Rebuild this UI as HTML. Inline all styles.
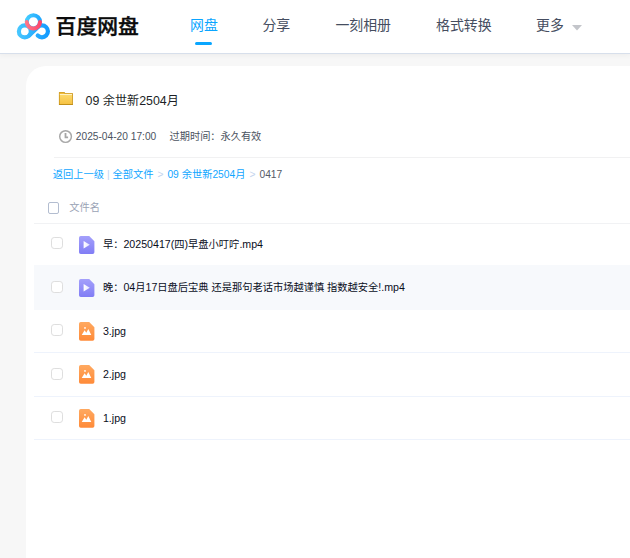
<!DOCTYPE html>
<html lang="zh-CN">
<head>
<meta charset="utf-8">
<title>百度网盘</title>
<style>
*{box-sizing:border-box;margin:0;padding:0}
html,body{width:630px;height:558px;overflow:hidden}
body{background:#f7f7f7;font-family:"Liberation Sans","Noto Sans CJK SC",sans-serif;color:#03081a;position:relative}
.hd{position:absolute;left:0;top:0;width:630px;height:54px;background:#fff;border-bottom:1px solid #d7dfeb;box-shadow:0 2px 5px rgba(0,0,0,.04)}
.logo{position:absolute;left:0;top:0}
.brand{position:absolute;left:55.6px;top:11.6px;font-size:20.8px;font-weight:500;-webkit-text-stroke:.4px #0b0b0b;line-height:30px;color:#0b0b0b;white-space:nowrap}
.nav{position:absolute;top:12.5px;font-size:13.9px;line-height:24px;color:#454d60;white-space:nowrap}
.nav.on{color:#0aa5ff}
.bar{position:absolute;left:195px;top:41.7px;width:17px;height:3px;border-radius:2px;background:#09a6ff}
.panel{position:absolute;left:26px;top:66px;width:620px;height:520px;background:#fff;border-top-left-radius:20px}
.t{position:absolute;white-space:nowrap}
.title{left:85.6px;top:92px;font-size:12.1px;line-height:18px;color:#1c1f26}
.meta{top:128.6px;font-size:10.2px;line-height:16px;color:#4b5361}
.hr{position:absolute;height:1px;background:#f1f1f2}
.crumb{top:166.5px;font-size:10.25px;line-height:16px;color:#10a6ff}
.crumb i{font-style:normal;color:#c3d4ee}
.crumb i.g{margin:0 1.1px 0 1.2px}
.colh{left:69.3px;top:199.6px;font-size:10.25px;line-height:16px;color:#9aa3b5}
.cb{position:absolute;width:11.6px;height:11.8px;border:1px solid #dedede;border-radius:3.2px;background:#fff}
.row{position:absolute;left:34px;width:596px}
.fn{position:absolute;left:102.9px;font-size:10.25px;line-height:16px;color:#0a0e1c;white-space:nowrap}
.ic{position:absolute;left:78.8px}
.fn b{font-weight:400;font-size:10.65px}
.title b{font-weight:400;font-size:12.4px}
</style>
</head>
<body>
<div class="hd">
  <svg class="logo" width="60" height="53" viewBox="0 0 60 53">
    <defs>
      <linearGradient id="gb" gradientUnits="userSpaceOnUse" x1="17" y1="0" x2="50" y2="0"><stop offset="0" stop-color="#48c8ff"/><stop offset="1" stop-color="#0f98ff"/></linearGradient>
      <linearGradient id="gt" gradientUnits="userSpaceOnUse" x1="25" y1="0" x2="42" y2="0"><stop offset="0" stop-color="#48d0ff"/><stop offset="1" stop-color="#1ca4ff"/></linearGradient>
      <linearGradient id="gr" gradientUnits="userSpaceOnUse" x1="25" y1="0" x2="42" y2="0"><stop offset="0" stop-color="#ff7a8c"/><stop offset="1" stop-color="#ff3f66"/></linearGradient>
    </defs>
    <g fill="none" stroke-linecap="round" stroke-width="4.2">
      <path stroke="url(#gb)" d="M37.700 35.500 A5.950 5.950 0 1 0 37.700 27.200 L29.100 35.600"/>
      <circle cx="24.850" cy="31.400" r="5.950" stroke="url(#gb)"/>
      <circle cx="33.400" cy="21.800" r="6.600" stroke="url(#gt)" stroke-width="4"/>
      <path stroke="url(#gr)" stroke-width="4" d="M26.800 22 A6.600 6.600 0 0 0 40 22"/>
    </g>
  </svg>
  <div class="brand">百度网盘</div>
  <div class="nav on" style="left:190px">网盘</div>
  <div class="bar"></div>
  <div class="nav" style="left:262.4px">分享</div>
  <div class="nav" style="left:335.4px">一刻相册</div>
  <div class="nav" style="left:436px">格式转换</div>
  <div class="nav" style="left:536px">更多</div>
  <svg style="position:absolute;left:571px;top:24px" width="12" height="8" viewBox="0 0 12 8"><path d="M1 .9h10L6 6.4z" fill="#c3c5ca"/></svg>
</div>
<div class="panel"></div>

<svg style="position:absolute;left:58px;top:91px" width="16" height="15" viewBox="0 0 16 15">
  <defs><linearGradient id="gf" x1="0" y1="0" x2="0" y2="1"><stop offset="0" stop-color="#fddb6e"/><stop offset="1" stop-color="#f6c243"/></linearGradient></defs>
  <path d="M.9 1.4 a.5 .5 0 0 1 .5-.5 h5 a.5 .5 0 0 1 .5 .5 v.6 h7.5 a.5 .5 0 0 1 .5 .5 v11 a.5 .5 0 0 1-.5 .5 h-13 a.5 .5 0 0 1-.5-.5z" fill="#cf9a1e"/>
  <rect x=".9" y="13" width="14" height="1" rx=".4" fill="#bb8a14"/>
  <rect x="1.8" y="2.9" width="12.2" height="10.2" fill="url(#gf)"/>
  <rect x="1.8" y="2.9" width="12.2" height=".9" fill="#fff8dc"/>
  <rect x="1.7" y="1.7" width="4.6" height="1.3" fill="#f0bc3c"/>
</svg>
<div class="t title"><b>09 </b>余世新<b>2504</b>月</div>

<svg style="position:absolute;left:58px;top:129px" width="15" height="15" viewBox="0 0 15 15">
  <circle cx="7.550" cy="7.500" r="5.850" fill="none" stroke="#a8a8a8" stroke-width="1.450"/>
  <path d="M7.500 4.100V8.300H10.100" fill="none" stroke="#a6a6a6" stroke-width="1.800"/>
</svg>
<div class="t meta" style="left:75.8px">2025-04-20 17:00</div>
<div class="t meta" style="left:169.6px">过期时间：永久有效</div>
<div class="hr" style="left:54px;top:157px;width:576px"></div>

<div class="t crumb" style="left:52.8px">返回上一级 <i>|</i> 全部文件 <i class="g">&gt;</i> 09 余世新2504月 <i class="g">&gt;</i> <span style="color:#555b66">0417</span></div>

<div class="cb" style="left:47.6px;top:202px;border-color:#b3bdd0;border-radius:2px;width:11.4px"></div>
<div class="t colh">文件名</div>
<div class="hr" style="left:34px;top:223px;width:596px;background:#f1f2f4"></div>

<div class="row" style="top:265px;height:45px;background:#f7f9fc"></div>
<div class="hr" style="left:34px;top:352px;width:596px;background:#eef3fc"></div>
<div class="hr" style="left:34px;top:396px;width:596px;background:#eef3fc"></div>
<div class="hr" style="left:34px;top:439px;width:596px;background:#eef3fc"></div>

<div class="cb" style="left:51px;top:237.2px"></div>
<div class="cb" style="left:51px;top:281px"></div>
<div class="cb" style="left:51px;top:324.2px"></div>
<div class="cb" style="left:51px;top:367.8px"></div>
<div class="cb" style="left:51px;top:411.2px"></div>

<svg width="0" height="0" style="position:absolute">
  <defs>
    <linearGradient id="gv" x1="0" y1="0" x2="0" y2="1"><stop offset="0" stop-color="#a4a0fb"/><stop offset="1" stop-color="#817df5"/></linearGradient>
    <linearGradient id="gp" x1="0" y1="0" x2="1" y2="0"><stop offset="0" stop-color="#fff"/><stop offset="1" stop-color="#e4e2ff"/></linearGradient>
    <linearGradient id="gi" x1="0" y1="0" x2="0" y2="1"><stop offset="0" stop-color="#ffa960"/><stop offset="1" stop-color="#ff8a38"/></linearGradient>
    <g id="vid"><path d="M1.800 0h8.400l5.200 5.200v11a1.800 1.800 0 0 1-1.800 1.800H1.800A1.800 1.800 0 0 1 0 16.200V1.800A1.800 1.800 0 0 1 1.800 0z" fill="url(#gv)"/><path d="M4.600 5.100l6.200 3.700-6.200 3.700z" fill="url(#gp)"/></g>
    <g id="img"><path d="M1.800 0h8.400l5.200 5.200v11.800a1.800 1.800 0 0 1-1.800 1.800H1.800A1.800 1.800 0 0 1 0 17V1.800A1.800 1.800 0 0 1 1.800 0z" fill="url(#gi)"/><path d="M2.700 12.900l2.900-4.600 1.700 2.500 2-3.700 3 5.800z" fill="#fff"/><circle cx="6" cy="5.900" r=".9" fill="#fff"/></g>
  </defs>
</svg>
<svg class="ic" style="top:235.700px" width="16" height="19"><use href="#vid"/></svg>
<svg class="ic" style="top:279.400px" width="16" height="19"><use href="#vid"/></svg>
<svg class="ic" style="top:322px" width="16" height="19"><use href="#img"/></svg>
<svg class="ic" style="top:365.100px" width="16" height="19"><use href="#img"/></svg>
<svg class="ic" style="top:409px" width="16" height="19"><use href="#img"/></svg>

<div class="fn" style="top:236.2px">早：<b>20250417(</b>四<b>)</b>早盘小叮咛<b>.mp4</b></div>
<div class="fn" style="top:278.8px">晚：<b>04</b>月<b>17</b>日盘后宝典 还是那句老话市场越谨慎 指数越安全<b>!.mp4</b></div>
<div class="fn" style="top:323px"><b>3.jpg</b></div>
<div class="fn" style="top:366.4px"><b>2.jpg</b></div>
<div class="fn" style="top:409.8px"><b>1.jpg</b></div>
</body>
</html>
